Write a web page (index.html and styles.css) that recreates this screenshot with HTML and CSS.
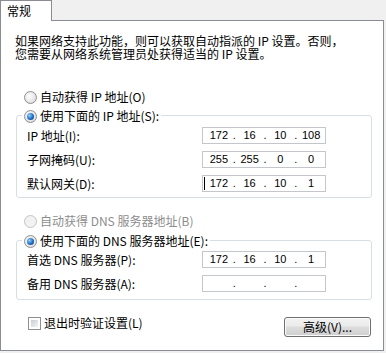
FILE: index.html
```html
<!DOCTYPE html>
<html lang="zh-CN">
<head>
    <meta charset="UTF-8">
    <title>IP 设置</title>
    <link rel="stylesheet" href="styles.css">
</head>
<body>
    <div class="dialog">
        <div class="tabs">
            <div class="tab">常规</div>
        </div>
        <div class="panel">
            <p class="intro">如果网络支持此功能，则可以获取自动指派的 IP 设置。否则，<br>您需要从网络系统管理员处获得适当的 IP 设置。</p>

            <div class="option first"><span class="radio"></span><span>自动获得 IP 地址(O)</span></div>
            <div class="group ip-group">
                <div class="legend"><span class="radio on"></span><span>使用下面的 IP 地址(S):</span></div>
                <div class="field">
                    <span class="label">IP 地址(I):</span>
                    <div class="ip"><span>172</span><i>.</i><span>16</span><i>.</i><span>10</span><i>.</i><span>108</span></div>
                </div>
                <div class="field">
                    <span class="label">子网掩码(U):</span>
                    <div class="ip"><span>255</span><i>.</i><span>255</span><i>.</i><span>0</span><i>.</i><span>0</span></div>
                </div>
                <div class="field">
                    <span class="label">默认网关(D):</span>
                    <div class="ip"><b class="caret"></b><span>172</span><i>.</i><span>16</span><i>.</i><span>10</span><i>.</i><span>1</span></div>
                </div>
            </div>

            <div class="option second disabled"><span class="radio"></span><span>自动获得 DNS 服务器地址(B)</span></div>
            <div class="group dns-group">
                <div class="legend"><span class="radio on"></span><span>使用下面的 DNS 服务器地址(E):</span></div>
                <div class="field">
                    <span class="label">首选 DNS 服务器(P):</span>
                    <div class="ip"><span>172</span><i>.</i><span>16</span><i>.</i><span>10</span><i>.</i><span>1</span></div>
                </div>
                <div class="field">
                    <span class="label">备用 DNS 服务器(A):</span>
                    <div class="ip"><span></span><i>.</i><span></span><i>.</i><span></span><i>.</i><span></span></div>
                </div>
            </div>

            <div class="footer">
                <div class="checkrow"><span class="check"></span><span>退出时验证设置(L)</span></div>
                <button class="btn">高级(V)...</button>
            </div>
        </div>
    </div>
</body>
</html>
```

FILE: styles.css
```css
html, body {
    margin: 0;
    padding: 0;
}
body {
    width: 386px;
    height: 353px;
    background: #f0f0f0;
    font-family: "Noto Sans CJK SC", sans-serif;
    font-size: 12px;
    line-height: 14px;
    color: #000;
    overflow: hidden;
}
.tabs {
    display: flex;
    height: 20px;
}
.tab {
    position: relative;
    z-index: 1;
    box-sizing: border-box;
    width: 52px;
    height: 21px;
    padding: 2px 0 0 6px;
    line-height: 15px;
    background: #fff;
    border: 1px solid #898c95;
    border-bottom: none;
}
.panel {
    box-sizing: border-box;
    width: 384px;
    height: 331px;
    background: #fff;
    border: 1px solid #898c95;
}
.intro {
    margin: 13px 0 0 14px;
    line-height: 13px;
    white-space: nowrap;
}
.option, .legend {
    display: flex;
    align-items: center;
    height: 20px;
    line-height: 20px;
    white-space: nowrap;
}
.option {
    padding-left: 23px;
}
.option.first {
    margin-top: 27px;
}
.option.second {
    margin-top: 13px;
}
.option .radio, .legend .radio {
    margin-right: 3px;
}
.disabled {
    color: #8d8d8d;
}
.radio {
    display: flex;
    align-items: center;
    justify-content: center;
    box-sizing: border-box;
    width: 13px;
    height: 13px;
    border-radius: 50%;
    border: 1px solid #8e8f8f;
    background: radial-gradient(circle at 40% 40%, #ffffff, #dcdcdc 80%);
}
.disabled .radio {
    border-color: #c4c4c4;
    background: #f2f2f2;
}
.radio.on::after {
    content: "";
    width: 7px;
    height: 7px;
    border-radius: 50%;
    background: radial-gradient(circle at 35% 35%, #8fd0fb, #1f6dc2 55%, #0c3a78);
}
.group {
    box-sizing: border-box;
    width: 356px;
    margin-left: 15px;
    border: 1px solid #d5dfe5;
    border-radius: 3px;
}
.ip-group {
    margin-top: 8px;
    padding-bottom: 5px;
}
.dns-group {
    margin-top: 9px;
    padding-bottom: 7px;
}
.legend {
    width: max-content;
    margin: -10px 0 0 5px;
    padding: 0 2px;
    background: #fff;
}
.field {
    display: flex;
    align-items: center;
    height: 17px;
    padding-left: 10px;
    margin-top: 7px;
}
.ip-group .legend + .field {
    margin-top: 1px;
}
.dns-group .legend + .field {
    margin-top: 0;
}
.label {
    width: 175px;
    white-space: nowrap;
}
.ip {
    position: relative;
    display: flex;
    box-sizing: border-box;
    width: 124px;
    height: 17px;
    padding-left: 2px;
    border: 1px solid #c3c6cb;
    font-family: "Liberation Sans", sans-serif;
    font-size: 11px;
    line-height: 15px;
}
.ip span {
    width: 28px;
    text-align: center;
}
.ip i {
    width: 3px;
    font-style: normal;
    text-align: center;
}
.caret {
    position: absolute;
    left: 1px;
    top: 1px;
    width: 1px;
    height: 13px;
    background: #000;
}
.footer {
    display: flex;
    align-items: flex-start;
    margin-top: 16px;
    padding-left: 27px;
}
.checkrow {
    display: flex;
    align-items: center;
    height: 14px;
    line-height: 14px;
}
.check {
    box-sizing: border-box;
    width: 13px;
    height: 13px;
    margin-right: 3px;
    padding: 2px;
    border: 1px solid #8e8f8f;
    background: linear-gradient(135deg, #c9cdd3, #f4f4f4) content-box;
}
.btn {
    box-sizing: border-box;
    width: 87px;
    height: 20px;
    margin: 1px 12px 0 auto;
    padding: 0;
    border: 1px solid #707070;
    border-radius: 3px;
    background: linear-gradient(#f2f2f2, #ebebeb 45%, #dddddd 50%, #cfcfcf);
    box-shadow: inset 0 0 0 1px #fbfbfb;
    font-family: "Noto Sans CJK SC", sans-serif;
    font-size: 12px;
    line-height: 18px;
    color: #000;
}
```
